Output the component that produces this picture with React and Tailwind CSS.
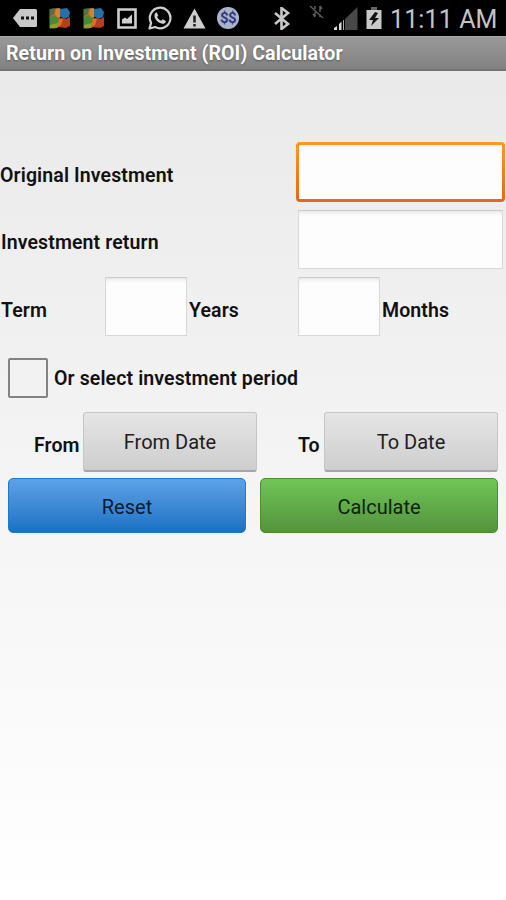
import { useState } from "react";

const AvgIcon = ({ className }) => (
    <svg viewBox="0 0 24 22" className={`h-[22px] w-6 shrink-0 ${className}`}>
        <path d="M1.500 2l9-1 2 3v6l-4 3-7-2z" fill="#a9702c" />
        <path d="M2 2l5-.5-1 5-4 3z" fill="#4c7348" />
        <path d="M8 2l4-1 1 8-3 2-3-4z" fill="#d9822a" />
        <path d="M12 2l7-1 3 4-1 5-5 2-4-3z" fill="#2670a8" />
        <path d="M1.500 10l5-1 5 3-1 8-4 1.500H1.500z" fill="#498a38" />
        <path d="M2 18l8-2-1 5H2z" fill="#93a030" />
        <path d="M13 11l5 1 4-2v9l-4 2-8-1z" fill="#b93c20" />
        <path d="M11 11l4 1-2 6-4 3z" fill="#dd711f" />
    </svg>
);

const StatusBar = () => (
    <div className="flex h-9 items-center bg-black text-[#c4c4c4]">
        {/* Notifications */}
        <svg viewBox="0 0 24 20" className="ml-[13px] h-5 w-6 shrink-0" fill="#c9c9c9">
            <path d="M7 1h15.5a1.5 1.5 0 0 1 1.500 1.500v15a1.500 1.500 0 0 1-1.500 1.500H7L0 10z" />
            <path d="M8 8.500h3v3H8zM13 8.500h3v3h-3zM18 8.500h3v3h-3z" fill="#111" />
        </svg>
        <AvgIcon className="ml-[11px]" />
        <AvgIcon className="ml-[10px]" />
        <svg viewBox="0 0 20 21" className="ml-[11px] h-[21px] w-5 shrink-0">
            <path d="M1.500 1.500h17v18h-17z" fill="none" stroke="#cfcfcf" strokeWidth="2.600" />
            <path d="M5 15.500v-4l3-2 2 1.500 5-4.500v9z" fill="#cfcfcf" />
        </svg>
        <svg viewBox="0 0 24 24" className="ml-[11px] h-6 w-6 shrink-0">
            <path
                d="M1.500 22.500l1.600-5.600A10.300 10.300 0 1 1 7.200 21z"
                fill="none"
                stroke="#cfcfcf"
                strokeWidth="2.200"
                strokeLinejoin="round"
            />
            <path
                d="M8.600 6.200l1.700 3.200-1.200 1.500c1 1.900 2.200 3 4.200 3.900l1.400-1.500 3.200 1.600c-.2 2-1.800 3-3.500 2.800-4.300-.7-7.300-3.700-8-7.700-.1-1.800.8-3.200 2.200-3.800z"
                fill="#cfcfcf"
            />
        </svg>
        <svg viewBox="0 0 23 21" className="ml-[11px] h-[21px] w-[23px] shrink-0">
            <path d="M11.500.5L22.500 20.500H.5z" fill="#cfcfcf" />
            <path d="M10.200 7.500h2.600v7h-2.600zM10.200 16h2.600v2.500h-2.600z" fill="#222" />
        </svg>
        <span className="ml-[11px] flex h-[22px] w-[22px] shrink-0 items-center justify-center rounded-full bg-[#a9b4cc] font-[Roboto] text-[15px] font-bold tracking-[-0.5px] text-[#30387c]">
            $$
        </span>

        {/* System icons */}
        <svg viewBox="0 0 18 23" className="ml-[34px] h-[23px] w-[18px] shrink-0">
            <path
                d="M2 6l13 11-6.500 5V1L15 6 2 17"
                fill="none"
                stroke="#c8c8c8"
                strokeWidth="2.600"
            />
        </svg>
        <svg viewBox="0 0 16 14" className="mb-[13px] ml-[18px] h-[14px] w-4 shrink-0">
            <path
                d="M1 1l13 12M6 1v3M6 7v4M4 9l2 3M11 12v-2M11 7V1M11 1l2 3"
                fill="none"
                stroke="#5a5a5a"
                strokeWidth="1.600"
            />
        </svg>
        <svg viewBox="0 0 24 24" className="ml-[9px] h-6 w-6 shrink-0">
            <path d="M11 13L23.500 1v23H11z" fill="#484848" />
            <path d="M0 24v-2l3-2v4zM5 24v-6l2.500-2.500V24zM9 24v-9.500l.8-.8V24z" fill="#d8d8d8" />
        </svg>
        <svg viewBox="0 0 16 24" className="ml-[8px] h-6 w-4 shrink-0">
            <path d="M5 1h6v3H5z" fill="#666" />
            <path d="M.5 4h15v19H.5z" fill="#c9c9c9" />
            <path d="M9 6l-6 8h4l-2 6 8-8H9l3-5z" fill="#111" />
        </svg>
        <span className="ml-[8px] mt-[3px] whitespace-nowrap font-[Roboto] text-[25px] font-normal leading-9">11:11 AM</span>
    </div>
);

const fieldStyle =
    "block h-[59px] border border-[#d8d8d8] border-t-[#cacaca] bg-[#fdfdfd] px-2 shadow-[inset_0_4px_5px_-3px_#dedede] outline-none";
const dateStyle =
    "h-[60px] w-[174px] rounded-[3px] border border-[#c6c6c6] border-b-2 border-b-[#a6a6a6] bg-linear-to-b from-[#e5e5e5] to-[#cecece] text-[20px] font-normal tracking-normal text-[#202020]";

const App = () => {
    const [usePeriod, setUsePeriod] = useState(false);

    return (
        <div className="h-[900px] w-[506px] overflow-hidden bg-linear-to-b from-[#e8e8e8] to-white font-[Roboto,sans-serif] text-[19.5px] font-semibold tracking-[0.12px] text-[#111]">
            <StatusBar />
            <header className="h-[35px] border-t border-b-2 border-t-[#aaa] border-b-[#737373] bg-linear-to-b from-[#999] to-[#828282] pl-1.5 text-[19.6px] font-bold leading-[34px] tracking-[0.05px] text-white [text-shadow:0_1px_2px_#555]">
                Return on Investment (ROI) Calculator
            </header>

            <main className="pt-[71px]">
                {/* Amounts */}
                <div className="flex h-[60px] items-center">
                    <label className="w-[296px] pt-[7px]">Original Investment</label>
                    <div className="h-[60px] w-[209px] rounded-[4px] bg-linear-to-b from-[#f89a25] to-[#e26818] p-[3px]">
                        <input className="block h-full w-full bg-[#fdfdfd] px-2 shadow-[inset_0_4px_5px_-3px_#e8e8e8] outline-none" />
                    </div>
                </div>
                <div className="mt-2 flex items-center">
                    <label className="w-[298px] pl-px pt-1.5">Investment return</label>
                    <input className={`w-[205px] ${fieldStyle}`} />
                </div>

                {/* Term */}
                <div className="mt-2 flex items-center">
                    <span className="w-[105px] pl-px pt-2">Term</span>
                    <input className={`w-[82px] ${fieldStyle}`} />
                    <label className="w-[111px] pl-0.5 pt-2">Years</label>
                    <input className={`w-[82px] ${fieldStyle}`} />
                    <label className="pl-0.5 pt-2">Months</label>
                </div>

                {/* Investment period */}
                <label className="mt-[22px] flex items-center">
                    <input
                        type="checkbox"
                        checked={usePeriod}
                        onChange={(e) => setUsePeriod(e.target.checked)}
                        className="ml-2 h-10 w-10 appearance-none rounded-[2px] border-2 border-[#828282] bg-[#f2f2f2] checked:bg-[#1d79c9]"
                    />
                    <span className="ml-1.5 pt-0.5">Or select investment period</span>
                </label>
                <div className="mt-[14px] flex items-center">
                    <span className="w-[83px] pl-[34px] pt-2">From</span>
                    <button className={dateStyle}>From Date</button>
                    <span className="w-[67px] pl-[41px] pt-2">To</span>
                    <button className={dateStyle}>To Date</button>
                </div>

                {/* Actions */}
                <div className="ml-2 mt-1.5 flex gap-[14px] text-[20px] font-normal tracking-normal">
                    <button className="h-[55px] w-[238px] rounded-[5px] border border-[#1d79cb] bg-linear-to-b from-[#5ea2e6] to-[#1672c4] pt-0.5 text-[#081c32]">
                        Reset
                    </button>
                    <button className="h-[55px] w-[238px] rounded-[5px] border border-[#479030] bg-linear-to-b from-[#70c656] to-[#54933e] pt-0.5 text-[#0c240a]">
                        Calculate
                    </button>
                </div>
            </main>
        </div>
    );
};

export default App;
